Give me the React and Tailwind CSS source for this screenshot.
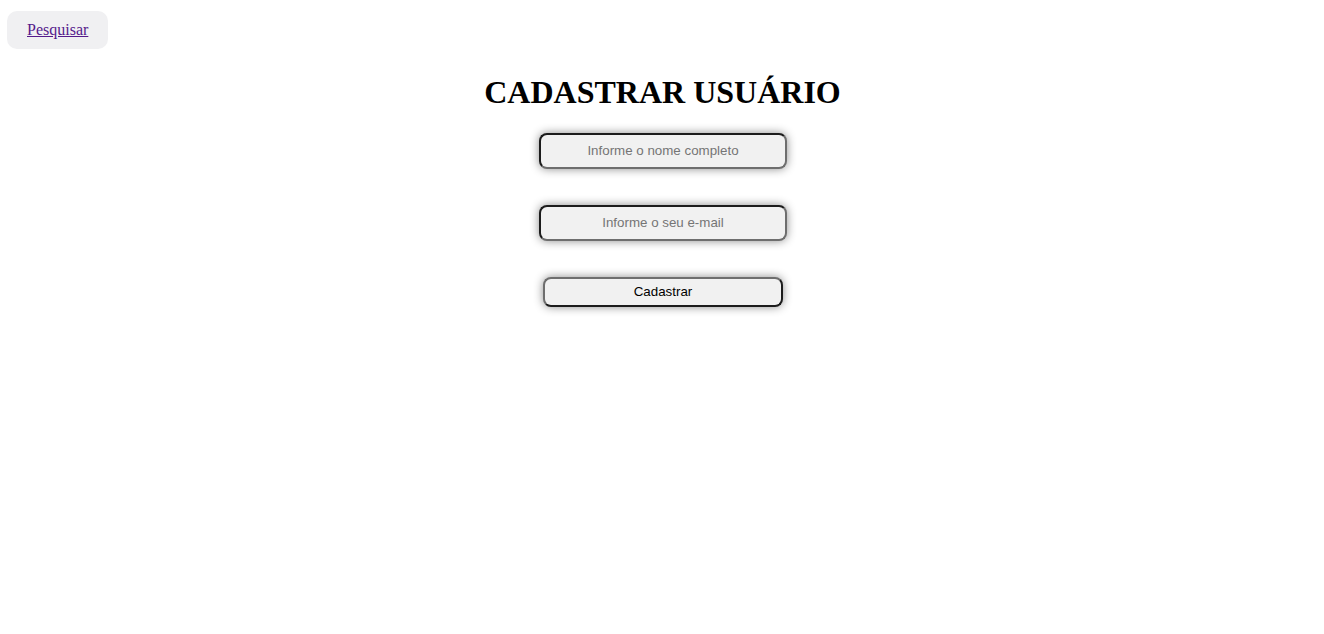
import React, { useState } from "react";

export default function App() {
    const [nome, setNome] = useState("");
    const [email, setEmail] = useState("");

    function handleSubmit(e) {
        e.preventDefault();
    }

    return (
        <div className="min-h-screen w-full bg-white font-['Liberation_Serif',serif]">
            <nav className="pt-[11px] pl-[7px]">
                <div className="inline-flex h-[38px] items-center rounded-[10px] bg-[#f0f0f2] px-5">
                    <a href="#" className="text-base text-[#551a8b] underline">
                        Pesquisar
                    </a>
                </div>
            </nav>
            <h1 className="mt-[25px] text-center text-[32px] leading-[37px] font-bold text-black pl-px">CADASTRAR USUÁRIO</h1>
            <form onSubmit={handleSubmit} className="mt-[22px] flex flex-col items-center pl-[2px]">
                <input
                    type="text"
                    value={nome}
                    onChange={e => setNome(e.target.value)}
                    placeholder="Informe o nome completo"
                    className="h-[36px] w-[248px] rounded-[8px] border-2 border-t-[#1c1c1c] border-l-[#1c1c1c] border-r-[#6e6e6e] border-b-[#6e6e6e] bg-[#f1f1f1] pb-[2px] text-center font-['Liberation_Sans',sans-serif] text-[13.33px] text-black shadow-[0_0_10px_rgba(0,0,0,0.45)] outline-none placeholder:text-[#757575]"
                />
                <input
                    type="email"
                    value={email}
                    onChange={e => setEmail(e.target.value)}
                    placeholder="Informe o seu e-mail"
                    className="mt-[36px] h-[36px] w-[248px] rounded-[8px] border-2 border-t-[#1c1c1c] border-l-[#1c1c1c] border-r-[#6e6e6e] border-b-[#6e6e6e] bg-[#f1f1f1] pb-[2px] text-center font-['Liberation_Sans',sans-serif] text-[13.33px] text-black shadow-[0_0_10px_rgba(0,0,0,0.45)] outline-none placeholder:text-[#757575]"
                />
                <button
                    type="submit"
                    className="mt-[36px] h-[30px] w-[240px] rounded-[8px] border-2 border-t-[#6e6e6e] border-l-[#6e6e6e] border-r-[#1c1c1c] border-b-[#1c1c1c] bg-[#f1f1f1] font-['Liberation_Sans',sans-serif] text-[13.33px] text-black shadow-[0_0_10px_rgba(0,0,0,0.45)]"
                >
                    Cadastrar
                </button>
            </form>
        </div>
    );
}
